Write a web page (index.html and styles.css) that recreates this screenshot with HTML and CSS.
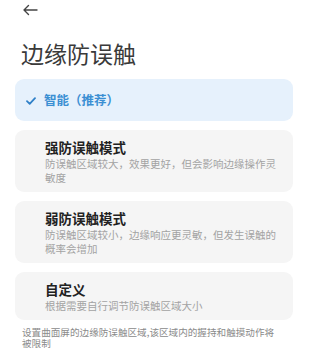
FILE: index.html
```html
<!DOCTYPE html>
<html lang="zh">
<head>
<meta charset="utf-8">
<link rel="stylesheet" href="styles.css">
</head>
<body>
<div class="page">
  <div class="topbar">
    <svg class="back" width="16" height="12" viewBox="0 0 16 12"><path d="M15 6H2M6.5 1.5L2 6l4.5 4.5" fill="none" stroke="#444" stroke-width="1.4" stroke-linecap="round" stroke-linejoin="round"/></svg>
  </div>
  <h1 class="title">边缘防误触</h1>
  <div class="list">
    <div class="card card-active">
      <svg class="check" width="10" height="8" viewBox="0 0 10 8"><path d="M1 4.2L3.7 6.8L9 1.2" fill="none" stroke="#2f80c8" stroke-width="1.8" stroke-linecap="round" stroke-linejoin="round"/></svg>
      <span class="active-label">智能（推荐）</span>
    </div>
    <div class="card">
      <div class="card-title">强防误触模式</div>
      <div class="card-desc">防误触区域较大，效果更好，但会影响边缘操作灵敏度</div>
    </div>
    <div class="card">
      <div class="card-title">弱防误触模式</div>
      <div class="card-desc">防误触区域较小，边缘响应更灵敏，但发生误触的概率会增加</div>
    </div>
    <div class="card">
      <div class="card-title">自定义</div>
      <div class="card-desc">根据需要自行调节防误触区域大小</div>
    </div>
  </div>
  <p class="footer">设置曲面屏的边缘防误触区域,该区域内的握持和触摸动作将被限制</p>
</div>
</body>
</html>
```
FILE: styles.css
```css
html, body {
  margin: 0;
  padding: 0;
  background: #ffffff;
}
body {
  font-family: "Noto Sans CJK SC", "Noto Sans", sans-serif;
  width: 320px;
  height: 356px;
  overflow: hidden;
}
.page {
  padding: 0 27px 0 15px;
}
.topbar {
  height: 20px;
  display: flex;
  align-items: center;
  padding-left: 7px;
}
.back {
  display: block;
}
.title {
  margin: 18px 0 0 6px;
  font-size: 23px;
  line-height: 30px;
  font-weight: 400;
  color: #3a3a3a;
}
.list {
  margin-top: 11px;
  display: flex;
  flex-direction: column;
  gap: 9px;
}
.card {
  background: #f5f5f5;
  border-radius: 9px;
  padding: 9px 16px 7px 30px;
}
.card-active {
  background: #e6f1fc;
  height: 42px;
  box-sizing: border-box;
  padding: 0 16px 0 11px;
  display: flex;
  align-items: center;
  gap: 8px;
}
.check {
  display: block;
  margin-top: 1px;
}
.active-label {
  font-size: 12.5px;
  font-weight: 700;
  color: #3a8fd3;
  line-height: 16px;
}
.card-title {
  font-size: 13.5px;
  font-weight: 700;
  color: #222;
  line-height: 17px;
}
.card-desc {
  margin-top: 1px;
  font-size: 10.5px;
  line-height: 14px;
  color: #a3a3a3;
}
.footer {
  margin: 7px 0 0 7px;
  width: 258px;
  font-size: 9.6px;
  line-height: 11px;
  color: #8a8a8a;
}
```
